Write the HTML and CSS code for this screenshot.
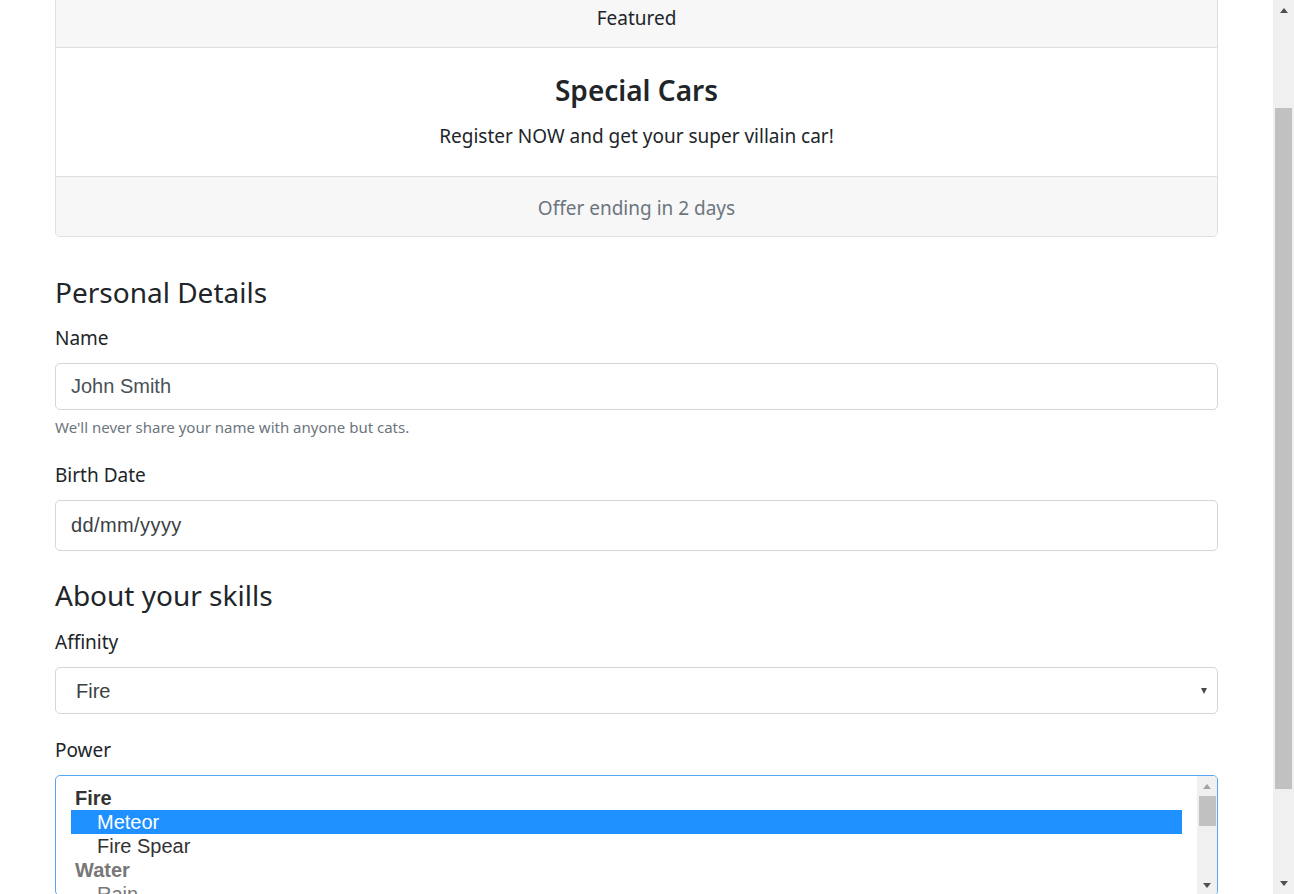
FILE: index.html
```html
<!DOCTYPE html>
<html lang="en">
<head>
<meta charset="utf-8">
<title>Register</title>
<link rel="stylesheet" href="styles.css">
</head>
<body>
<div class="window">
  <main class="page">
    <div class="container">
      <section class="card">
        <div class="card-header">Featured</div>
        <div class="card-body">
          <h5 class="card-title">Special Cars</h5>
          <p class="card-text">Register NOW and get your super villain car!</p>
        </div>
        <div class="card-footer">Offer ending in 2 days</div>
      </section>

      <form class="form">
        <h4 class="section-title">Personal Details</h4>
        <div class="form-group">
          <label class="label" for="name">Name</label>
          <input class="form-control" id="name" type="text" value="John Smith">
          <small class="form-text">We'll never share your name with anyone but cats.</small>
        </div>
        <div class="form-group">
          <label class="label" for="birth">Birth Date</label>
          <input class="form-control date-control" id="birth" type="text" value="dd/mm/yyyy">
        </div>

        <h4 class="section-title skills-title">About your skills</h4>
        <div class="form-group select-group">
          <label class="label" for="affinity">Affinity</label>
          <div class="select-wrap">
            <select class="form-control select-control" id="affinity">
              <option>Fire</option>
              <option>Water</option>
            </select>
          </div>
        </div>
        <div class="form-group">
          <label class="label">Power</label>
          <div class="listbox" role="listbox">
            <div class="options">
              <div class="optgroup">Fire</div>
              <div class="option selected">Meteor</div>
              <div class="option">Fire Spear</div>
              <div class="optgroup disabled">Water</div>
              <div class="option disabled">Rain</div>
            </div>
            <div class="lb-scroll">
              <div class="lb-btn"><span class="tri-up muted"></span></div>
              <div class="lb-thumb"></div>
              <div class="lb-track"></div>
              <div class="lb-btn"><span class="tri-down"></span></div>
            </div>
          </div>
        </div>
      </form>
    </div>
  </main>
  <div class="scrollbar">
    <div class="sb-btn"><span class="tri-up"></span></div>
    <div class="sb-gap"></div>
    <div class="sb-thumb"></div>
    <div class="sb-track"></div>
    <div class="sb-btn"><span class="tri-down"></span></div>
  </div>
</div>
</body>
</html>
```

FILE: styles.css
```css
* { box-sizing: border-box; }

html, body {
  margin: 0;
  padding: 0;
  background: #fff;
}

body {
  font-family: "Noto Sans", "Open Sans", sans-serif;
  font-size: 19px;
  line-height: 30px;
  color: #212529;
}

.window {
  display: flex;
  height: 894px;
  overflow: hidden;
}

.page {
  flex: 1;
  overflow: hidden;
}

.container {
  padding: 0 55px;
  margin-top: -14px;
}

/* Card */
.card {
  border: 1px solid #dfdfdf;
  border-radius: 5px;
  margin-bottom: 36px;
  text-align: center;
  overflow: hidden;
}

.card-header {
  background: #f7f7f8;
  border-bottom: 1px solid #dfdfdf;
  padding: 16px 25px 14px;
  height: 61px;
}

.card-body {
  padding: 25px 25px 0;
  height: 128px;
}

.card-title {
  margin: 0 0 14px;
  font-size: 28px;
  line-height: 34px;
  font-weight: 600;
}

.card-text {
  margin: 0;
}

.card-footer {
  background: #f7f7f8;
  border-top: 1px solid #dfdfdf;
  padding: 16px 25px 14px;
  height: 60px;
  color: #6c757d;
}

/* Form */
.form {
  margin: 0;
}

.section-title {
  margin: 0 0 12px;
  font-size: 28px;
  line-height: 38px;
  font-weight: 400;
}

.skills-title {
  margin-top: 25px;
  margin-bottom: 13px;
}

.form-group {
  margin-bottom: 20px;
}

.select-group {
  margin-bottom: 21px;
}

.form-group:last-child {
  margin-bottom: 0;
}

.label {
  display: block;
  margin-bottom: 10px;
}

.form-control {
  display: block;
  width: 100%;
  height: 47px;
  padding: 0 15px;
  font-family: "Liberation Sans", Arial, sans-serif;
  font-size: 20px;
  color: #495057;
  background: #fff;
  border: 1px solid #d6d6d6;
  border-radius: 5px;
  outline: none;
}

.form-text {
  display: block;
  margin-top: 5px;
  font-size: 15px;
  line-height: 25px;
  color: #6c757d;
}

.date-control {
  height: 51px;
  color: #3a3f44;
  letter-spacing: 0.4px;
}

.select-wrap {
  position: relative;
}

.select-control {
  appearance: none;
  -webkit-appearance: none;
  padding-left: 20px;
  color: #3a3f44;
}

.select-wrap::after {
  content: "";
  position: absolute;
  right: 11px;
  top: 21px;
  border-left: 3.5px solid transparent;
  border-right: 3.5px solid transparent;
  border-top: 6px solid #4a4a4a;
  pointer-events: none;
}

/* Listbox */
.listbox {
  display: flex;
  height: 121px;
  border: 1px solid #55a6f4;
  border-radius: 5px;
  overflow: hidden;
  font-family: "Liberation Sans", Arial, sans-serif;
  font-size: 20px;
  line-height: 24px;
  color: #333;
}

.options {
  flex: 1;
  padding: 10px 15px 0 15px;
}

.optgroup {
  font-weight: 700;
  padding-left: 4px;
  height: 24px;
}

.option {
  padding-left: 26px;
  height: 24px;
}

.option.selected {
  background: #1e90ff;
  color: #fff;
}

.disabled {
  color: #777;
}

.lb-scroll {
  width: 20px;
  background: #f0f0f0;
  display: flex;
  flex-direction: column;
}

.lb-btn {
  height: 20px;
  display: flex;
  align-items: center;
  justify-content: center;
  flex: none;
}

.lb-thumb {
  height: 30px;
  margin: 0 1px 0 2px;
  background: #c1c1c1;
  flex: none;
}

.lb-track {
  flex: 1;
}

/* Page scrollbar */
.scrollbar {
  width: 21px;
  background: #f0f0f0;
  display: flex;
  flex-direction: column;
  flex: none;
}

.sb-btn {
  height: 21px;
  display: flex;
  align-items: center;
  justify-content: center;
  flex: none;
}

.sb-gap {
  height: 87px;
  flex: none;
}

.sb-thumb {
  height: 681px;
  margin: 0 2px;
  background: #c1c1c1;
  flex: none;
}

.sb-track {
  flex: 1;
}

.tri-up,
.tri-down {
  width: 0;
  height: 0;
  border-left: 4.5px solid transparent;
  border-right: 4.5px solid transparent;
}

.tri-up {
  border-bottom: 5px solid #505050;
}

.tri-down {
  border-top: 5px solid #505050;
}

.tri-up.muted {
  border-bottom-color: #a3a3a3;
}
```
